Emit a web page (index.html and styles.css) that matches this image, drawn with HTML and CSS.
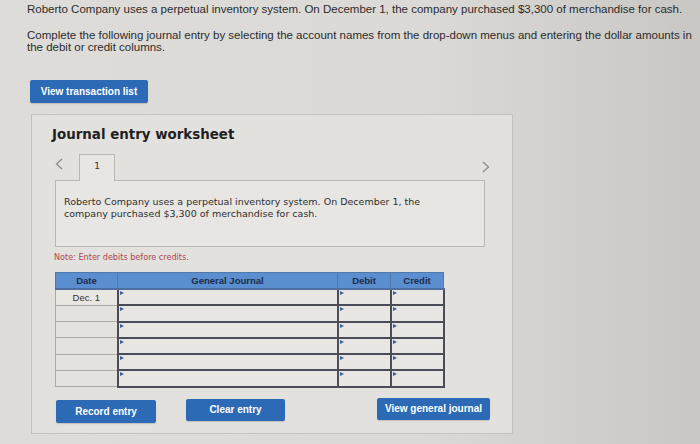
FILE: index.html
```html
<!DOCTYPE html>
<html lang="en">
<head>
    <meta charset="UTF-8">
    <title>Journal entry worksheet</title>
    <link rel="stylesheet" href="styles.css">
</head>
<body>
    <div class="page">
        <p class="question">Roberto Company uses a perpetual inventory system. On December 1, the company purchased $3,300 of merchandise for cash.</p>
        <p class="question">Complete the following journal entry by selecting the account names from the drop-down menus and entering the dollar amounts in the debit or credit columns.</p>

        <div class="list-row">
            <button class="btn btn-list">View transaction list</button>
        </div>

        <section class="worksheet">
            <h2>Journal entry worksheet</h2>

            <div class="tabs">
                <span class="arrow">
                    <svg viewBox="0 0 8 12" width="8" height="12"><path d="M7 1 L1.5 6 L7 11" fill="none" stroke="currentColor" stroke-width="1.3"/></svg>
                </span>
                <div class="tab">1</div>
                <span class="arrow arrow-next">
                    <svg viewBox="0 0 8 12" width="8" height="12"><path d="M1 1 L6.5 6 L1 11" fill="none" stroke="currentColor" stroke-width="1.3"/></svg>
                </span>
            </div>

            <div class="desc">
                <p>Roberto Company uses a perpetual inventory system. On December 1, the company purchased $3,300 of merchandise for cash.</p>
            </div>

            <p class="note">Note: Enter debits before credits.</p>

            <table class="journal">
                <thead>
                    <tr>
                        <th class="col-date">Date</th>
                        <th class="col-account">General Journal</th>
                        <th class="col-amount">Debit</th>
                        <th class="col-amount">Credit</th>
                    </tr>
                </thead>
                <tbody>
                    <tr>
                        <td class="date">Dec. 1</td>
                        <td class="input"></td>
                        <td class="input"></td>
                        <td class="input"></td>
                    </tr>
                    <tr>
                        <td class="date"></td>
                        <td class="input"></td>
                        <td class="input"></td>
                        <td class="input"></td>
                    </tr>
                    <tr>
                        <td class="date"></td>
                        <td class="input"></td>
                        <td class="input"></td>
                        <td class="input"></td>
                    </tr>
                    <tr>
                        <td class="date"></td>
                        <td class="input"></td>
                        <td class="input"></td>
                        <td class="input"></td>
                    </tr>
                    <tr>
                        <td class="date"></td>
                        <td class="input"></td>
                        <td class="input"></td>
                        <td class="input"></td>
                    </tr>
                    <tr>
                        <td class="date"></td>
                        <td class="input"></td>
                        <td class="input"></td>
                        <td class="input"></td>
                    </tr>
                </tbody>
            </table>

            <div class="actions">
                <button class="btn btn-record">Record entry</button>
                <button class="btn btn-clear">Clear entry</button>
                <button class="btn btn-journal">View general journal</button>
            </div>
        </section>
    </div>
</body>
</html>
```

FILE: styles.css
```css
:root {
    --panel-bg: #e3e1dd;
    --panel-border: #c4c2be;
    --box-bg: #e8e6e2;
    --text: #2b2b2d;
    --btn-blue: #2c6ab6;
    --head-blue: #5a8ecf;
    --cell-border: #4a4c58;
    --note-red: #b0444e;
}

*, *::before, *::after {
    box-sizing: border-box;
    margin: 0;
    padding: 0;
}

body {
    font-family: "Liberation Sans", Arial, sans-serif;
    color: var(--text);
    background: linear-gradient(90deg, #dedcd8 0%, #dcdad6 60%, #c9c7c4 100%);
    min-height: 100vh;
    overflow: hidden;
}

.page {
    padding: 3px 0 0 27px;
}

.question {
    font-size: 11.5px;
    line-height: 12.5px;
    margin-bottom: 13px;
    max-width: 670px;
}

.list-row {
    margin: 26px 0 0 3px;
}

.btn {
    font-family: "Liberation Sans", Arial, sans-serif;
    font-weight: 700;
    font-size: 10px;
    color: #fff;
    background: var(--btn-blue);
    border: none;
    border-radius: 2px;
    box-shadow: 0 1px 1px rgba(0, 0, 0, 0.15);
}

.btn-list {
    width: 118px;
    height: 23px;
}

.worksheet {
    margin: 11px 0 0 4px;
    width: 482px;
    height: 320px;
    background: var(--panel-bg);
    border: 1px solid var(--panel-border);
    padding: 11px 22px 0 23px;
}

.worksheet h2 {
    font-family: "DejaVu Sans", Verdana, sans-serif;
    font-size: 13.4px;
    font-weight: 700;
    color: #1f1f22;
    line-height: 18px;
    margin-left: -3px;
}

.tabs {
    display: flex;
    align-items: flex-end;
    margin-top: 10px;
    position: relative;
    z-index: 1;
}

.arrow {
    display: flex;
    color: #8c8c90;
    width: 24px;
    height: 26px;
    align-items: center;
    padding-bottom: 6px;
}

.arrow-next {
    margin-left: auto;
    width: 8px;
    align-self: center;
    padding-bottom: 0;
}

.tab {
    width: 36px;
    height: 27px;
    margin-bottom: -1px;
    background: var(--box-bg);
    border: 1px solid #b9b7b3;
    border-bottom: none;
    font-family: "DejaVu Sans", Verdana, sans-serif;
    font-size: 9px;
    text-align: center;
    padding-top: 6px;
    color: #333;
}

.desc {
    width: 430px;
    height: 67px;
    background: var(--box-bg);
    border: 1px solid #b9b7b3;
    padding: 15px 8px 0 8px;
}

.desc p {
    font-family: "DejaVu Sans", Verdana, sans-serif;
    font-size: 9.5px;
    line-height: 12.5px;
    color: #2e2e30;
    max-width: 370px;
}

.note {
    font-family: "DejaVu Sans", Verdana, sans-serif;
    font-size: 8.1px;
    color: var(--note-red);
    margin: 5px 0 0 -1px;
    line-height: 10px;
}

.journal {
    margin-top: 10px;
    border-collapse: collapse;
    width: 389px;
    table-layout: fixed;
    font-family: "Liberation Sans", Arial, sans-serif;
}

.journal th {
    background: var(--head-blue);
    color: #1e2c4a;
    font-size: 9.5px;
    font-weight: 700;
    height: 17px;
    border: 1px solid #4f79ad;
    border-bottom: 2px solid #4f6fa0;
}

.col-date { width: 62px; }
.col-account { width: 220px; }
.col-amount { width: 53px; }

.journal td {
    height: 16.3px;
    padding: 0;
}

.journal td.date {
    background: #e4e2de;
    border: 1px solid #a9a8a8;
    font-size: 9.5px;
    text-align: center;
    color: #333;
}

.journal tbody tr:first-child td.date {
    background: #e9e7e2;
}

.journal td.input {
    position: relative;
    background: #e8e6e2;
    border: 2px solid var(--cell-border);
}

.journal td.input::before {
    content: '';
    position: absolute;
    top: 1px;
    left: 1px;
    border-left: 4px solid #3b5f96;
    border-top: 2.5px solid transparent;
    border-bottom: 2.5px solid transparent;
}

.actions {
    display: flex;
    align-items: flex-start;
    margin-top: 11px;
    padding-left: 1px;
}

.btn-record {
    width: 100px;
    height: 23px;
    margin-top: 1px;
}

.btn-clear {
    width: 99px;
    height: 22px;
    margin-left: 30px;
}

.btn-journal {
    width: 113px;
    height: 22px;
    margin-left: 92px;
    margin-top: -1px;
}
```
